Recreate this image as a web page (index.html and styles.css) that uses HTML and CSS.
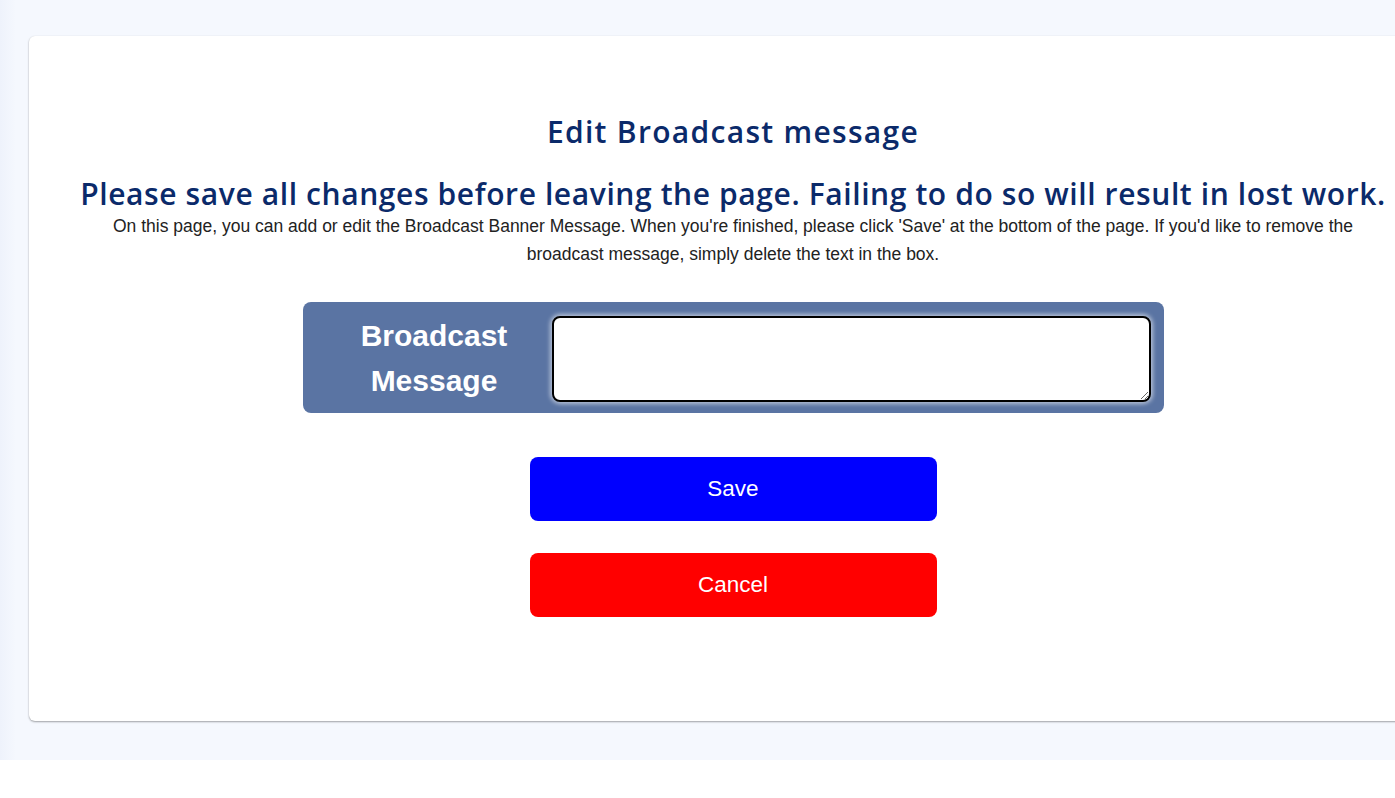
FILE: index.html
```html
<!DOCTYPE html>
<html lang="en">
<head>
<meta charset="utf-8">
<title>Edit Broadcast message</title>
<link rel="stylesheet" href="styles.css">
</head>
<body>
<div class="page">
  <div class="card">
    <h1 class="title">Edit Broadcast message</h1>
    <h2 class="warning">Please save all changes before leaving the page. Failing to do so will result in lost work.</h2>
    <p class="desc">On this page, you can add or edit the Broadcast Banner Message. When you're finished, please click 'Save' at the bottom of the page. If you'd like to remove the broadcast message, simply delete the text in the box.</p>
    <div class="panel">
      <label class="panel-label" for="msg">Broadcast Message</label>
      <textarea class="panel-input" id="msg"></textarea>
    </div>
    <button class="btn btn-save" type="button">Save</button>
    <button class="btn btn-cancel" type="button">Cancel</button>
  </div>
</div>
</body>
</html>
```

FILE: styles.css
```css
html, body {
  margin: 0;
  padding: 0;
  background: #ffffff;
  overflow: hidden;
}
.page {
  height: 760px;
  box-sizing: border-box;
  padding: 36px 0 0 29px;
  background: linear-gradient(to right, #eef2fb 0, #f5f8fe 16px);
}
.card {
  width: 1408px;
  height: 685px;
  box-sizing: border-box;
  background: #ffffff;
  border-radius: 6px;
  box-shadow: 0 1px 2px rgba(0, 0, 0, 0.35), 0 0 1px rgba(0, 0, 0, 0.08);
  display: flex;
  flex-direction: column;
  align-items: center;
  padding-top: 76px;
  font-family: "Liberation Sans", Arial, sans-serif;
}
.title {
  margin: 0;
  font-family: "Open Sans", sans-serif;
  font-weight: 600;
  font-size: 30px;
  line-height: 40px;
  color: #0b2a6a;
  letter-spacing: 1.3px;
}
.warning {
  margin: 24px 0 0;
  font-family: "Open Sans", sans-serif;
  font-weight: 600;
  font-size: 30px;
  line-height: 36px;
  color: #0b2a6a;
  white-space: nowrap;
  letter-spacing: 0.6px;
}
.desc {
  margin: 0;
  width: 1262px;
  text-align: center;
  font-size: 17.5px;
  line-height: 28px;
  color: #222222;
}
.panel {
  margin-top: 34px;
  width: 861px;
  height: 111px;
  box-sizing: border-box;
  background: #5a74a3;
  border-radius: 8px;
  display: flex;
  align-items: flex-start;
  padding: 14px 13px 11px 0;
}
.panel-label {
  width: 249px;
  flex: none;
  align-self: center;
  text-align: center;
  color: #ffffff;
  font-weight: bold;
  font-size: 30px;
  line-height: 45px;
  padding: 0 0 2px 14px;
  box-sizing: border-box;
}
.panel-input {
  flex: 1;
  height: 86px;
  box-sizing: border-box;
  margin: 0;
  border: 2px solid #000000;
  border-radius: 8px;
  background: #ffffff;
  box-shadow: 0 0 4px 2px rgba(255, 255, 255, 0.55);
  resize: vertical;
  font-family: "Liberation Sans", Arial, sans-serif;
  font-size: 16px;
}
.btn {
  width: 407px;
  height: 64px;
  border: none;
  border-radius: 8px;
  color: #ffffff;
  font-family: "Liberation Sans", Arial, sans-serif;
  font-size: 22.5px;
  cursor: pointer;
}
.btn-save {
  margin-top: 44px;
  background: #0000ff;
}
.btn-cancel {
  margin-top: 32px;
  background: #ff0000;
}
```
